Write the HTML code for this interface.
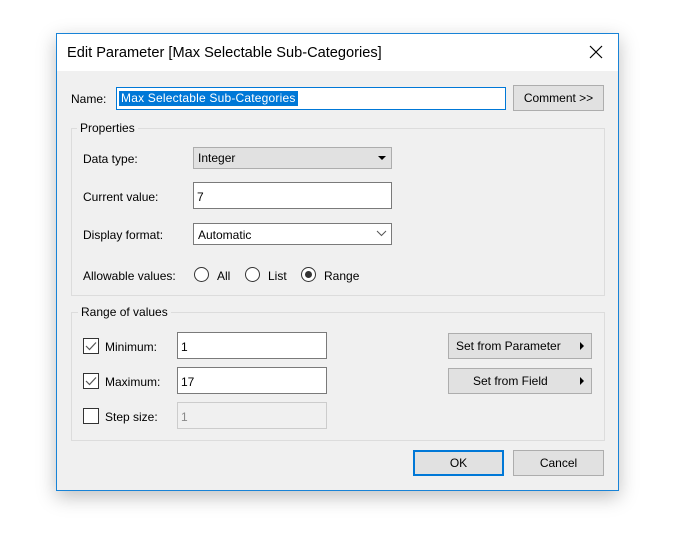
<!DOCTYPE html>
<html><head><style>
*{box-sizing:border-box;margin:0;padding:0}
body{width:699px;height:538px;background:#fff;font-family:"Liberation Sans",sans-serif;font-size:12px;color:#000;position:relative;overflow:hidden}
.a{position:absolute}
#dlg{left:56px;top:33px;width:563px;height:458px;background:#f0f0f0;border:1px solid #1883d7;box-shadow:0 6px 18px rgba(0,0,0,.25)}
#tb{left:57px;top:34px;width:561px;height:37px;background:#fff}
.t{position:absolute;white-space:nowrap;line-height:14px}
.inp{position:absolute;background:#fff;border:1px solid #7a7a7a}
.btn{position:absolute;background:#e1e1e1;border:1px solid #adadad;text-align:center;line-height:25px}
.grp{position:absolute;border:1px solid #dcdcdc}
.lg{position:absolute;background:#f0f0f0;padding:0 3px;line-height:14px}
.rad{position:absolute;width:15px;height:15px;border:1px solid #333;border-radius:50%;background:#fff}
.cb{position:absolute;width:16px;height:16px;border:1px solid #333;background:#fff}
.tri{position:absolute;width:0;height:0}
</style></head><body>
<div class="a" id="dlg"></div>
<div class="a" id="tb"></div>
<div class="t" style="left:67px;top:45px;font-size:14.6px;line-height:17px">Edit Parameter [Max Selectable Sub-Categories]</div>
<svg class="a" style="left:589px;top:45px" width="14" height="14"><path d="M1 1L13 13M13 1L1 13" stroke="#000" stroke-width="1.2"/></svg>

<div class="t" style="left:71px;top:92px">Name:</div>
<div class="inp" style="left:116px;top:87px;width:390px;height:23px;border-color:#0078d7"></div>
<div class="t" style="left:119px;top:91px;background:#0078d7;color:#fff;padding:0 2px;line-height:15px;letter-spacing:0.2px">Max Selectable Sub-Categories</div>
<div class="btn" style="left:513px;top:85px;width:91px;height:26px">Comment &gt;&gt;</div>

<div class="grp" style="left:71px;top:128px;width:534px;height:168px"></div>
<div class="lg" style="left:77px;top:121px">Properties</div>
<div class="t" style="left:83px;top:152px">Data type:</div>
<div class="btn" style="left:193px;top:147px;width:199px;height:22px;text-align:left;padding-left:4px;line-height:21px">Integer</div>
<div class="tri" style="left:378px;top:156px;border-left:4px solid transparent;border-right:4px solid transparent;border-top:4px solid #000"></div>
<div class="t" style="left:83px;top:190px">Current value:</div>
<div class="inp" style="left:193px;top:182px;width:199px;height:27px"></div>
<div class="t" style="left:197px;top:190px">7</div>
<div class="t" style="left:83px;top:228px">Display format:</div>
<div class="inp" style="left:193px;top:223px;width:199px;height:22px"></div>
<div class="t" style="left:198px;top:228px">Automatic</div>
<svg class="a" style="left:376px;top:230px" width="11" height="7"><path d="M1 1L5.5 5.5L10 1" stroke="#555" fill="none"/></svg>
<div class="t" style="left:83px;top:269px">Allowable values:</div>
<div class="rad" style="left:194px;top:267px"></div>
<div class="t" style="left:217px;top:269px">All</div>
<div class="rad" style="left:245px;top:267px"></div>
<div class="t" style="left:268px;top:269px">List</div>
<div class="rad" style="left:301px;top:267px"></div>
<div class="a" style="left:305px;top:271px;width:7px;height:7px;border-radius:50%;background:#333"></div>
<div class="t" style="left:324px;top:269px">Range</div>

<div class="grp" style="left:71px;top:312px;width:534px;height:129px"></div>
<div class="lg" style="left:78px;top:305px">Range of values</div>
<div class="cb" style="left:83px;top:338px"></div>
<svg class="a" style="left:85px;top:341px" width="12" height="10"><path d="M1 5L4.5 8.5L11 1.5" stroke="#555" fill="none" stroke-width="1.2"/></svg>
<div class="t" style="left:105px;top:340px">Minimum:</div>
<div class="inp" style="left:177px;top:332px;width:150px;height:27px"></div>
<div class="t" style="left:181px;top:340px">1</div>
<div class="cb" style="left:83px;top:373px"></div>
<svg class="a" style="left:85px;top:376px" width="12" height="10"><path d="M1 5L4.5 8.5L11 1.5" stroke="#555" fill="none" stroke-width="1.2"/></svg>
<div class="t" style="left:105px;top:375px">Maximum:</div>
<div class="inp" style="left:177px;top:367px;width:150px;height:27px"></div>
<div class="t" style="left:181px;top:375px">17</div>
<div class="cb" style="left:83px;top:408px"></div>
<div class="t" style="left:105px;top:410px">Step size:</div>
<div class="inp" style="left:177px;top:402px;width:150px;height:27px;background:#f0f0f0;border-color:#ccc"></div>
<div class="t" style="left:181px;top:410px;color:#888">1</div>
<div class="btn" style="left:448px;top:333px;width:144px;height:26px;text-align:left;padding-left:7px">Set from Parameter</div>
<div class="tri" style="left:580px;top:342px;border-top:4px solid transparent;border-bottom:4px solid transparent;border-left:4px solid #000"></div>
<div class="btn" style="left:448px;top:368px;width:144px;height:26px;text-align:left;padding-left:24px">Set from Field</div>
<div class="tri" style="left:580px;top:377px;border-top:4px solid transparent;border-bottom:4px solid transparent;border-left:4px solid #000"></div>

<div class="btn" style="left:413px;top:450px;width:91px;height:26px;border:2px solid #0078d7;line-height:23px">OK</div>
<div class="btn" style="left:513px;top:450px;width:91px;height:26px">Cancel</div>
</body></html>
